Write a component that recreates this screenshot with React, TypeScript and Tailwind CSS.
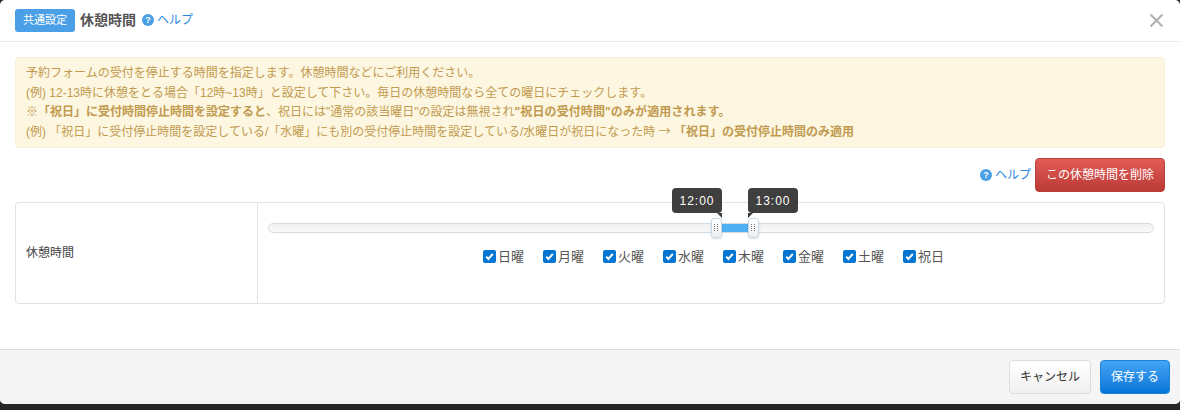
const FONT = "font-['Liberation_Sans','Noto_Sans_CJK_JP',sans-serif]"

const days = ["日曜", "月曜", "火曜", "水曜", "木曜", "金曜", "土曜", "祝日"]

const HelpIcon = () => (
    <span className="inline-flex items-center justify-center w-[12px] h-[12px] rounded-full bg-[#4a9fe6] text-white text-[9px] font-bold leading-none">?</span>
)

const Check = () => (
    <span className="inline-flex items-center justify-center w-[13px] h-[13px] rounded-[2px] bg-[#0075d2]">
        <svg width="11" height="11" viewBox="0 0 11 11" fill="none">
            <path d="M2.2 5.6 L4.4 7.9 L8.8 2.9" stroke="#fff" strokeWidth="2" />
        </svg>
    </span>
)

const Handle = () => (
    <div className="flex items-center justify-center w-[11px] h-[20px] rounded-[3px] border border-[#c9d9e6] bg-gradient-to-b from-white to-[#eeeeee] shadow-sm">
        <svg width="5" height="8" viewBox="0 0 5 8" fill="#777">
            <rect x="0" y="0" width="1" height="1" /><rect x="3" y="0" width="1" height="1" />
            <rect x="0" y="2" width="1" height="1" /><rect x="3" y="2" width="1" height="1" />
            <rect x="0" y="4" width="1" height="1" /><rect x="3" y="4" width="1" height="1" />
            <rect x="0" y="6" width="1" height="1" /><rect x="3" y="6" width="1" height="1" />
        </svg>
    </div>
)

const App = () => {
    return (
        <div className={`${FONT} w-[1180px] h-[410px] bg-[#262626] overflow-hidden flex flex-col text-[#555]`}>
            <div className="h-[404px] shrink-0 bg-white rounded-b-[5px] rounded-t-[5px] flex flex-col">
                <div className="h-[42px] shrink-0 flex items-center pl-[15px] pr-[16px] pb-[1px] border-b border-[#e9e9e9]">
                    <span className="w-[60px] h-[23px] flex items-center justify-center rounded-[3px] bg-[#4a9fe6] text-white text-[11px]">共通設定</span>
                    <span className="ml-[5px] text-[14px] font-bold text-[#555]">休憩時間</span>
                    <span className="ml-[6px] flex items-center gap-[3px] text-[12px] text-[#2b8ae0]"><HelpIcon />ヘルプ</span>
                    <svg className="ml-auto" width="15" height="15" viewBox="0 0 15 15" stroke="#b3b3b3" strokeWidth="2.2">
                        <path d="M1.5 1.5 L13.5 13.5 M13.5 1.5 L1.5 13.5" />
                    </svg>
                </div>

                <div className="px-[15px] pt-[15px] flex-1">
                    <div className="h-[91px] rounded-[4px] border border-[#f8eed8] bg-[#fdf6e1] px-[10px] pt-[6px] text-[12px] leading-[19.7px] text-[#c19a4f]">
                        <p>予約フォームの受付を停止する時間を指定します。休憩時間などにご利用ください。</p>
                        <p>(例) 12-13時に休憩をとる場合「12時~13時」と設定して下さい。毎日の休憩時間なら全ての曜日にチェックします。</p>
                        <p>※<span className="font-bold">「祝日」に受付時間停止時間を設定すると</span>、祝日には"通常の該当曜日"の設定は無視され<span className="font-bold tracking-[0.1px]">"祝日の受付時間"のみが適用されます。</span></p>
                        <p>(例) 「祝日」に受付停止時間を設定している/「水曜」にも別の受付停止時間を設定している/水曜日が祝日になった時 <span className="font-['Noto_Sans_CJK_JP',sans-serif] leading-none">→</span> <span className="font-bold">「祝日」の受付停止時間のみ適用</span></p>
                    </div>

                    <div className="mt-[10px] flex items-center justify-end">
                        <span className="flex items-center gap-[3px] text-[12px] text-[#2b8ae0]"><HelpIcon />ヘルプ</span>
                        <button className="ml-[4px] w-[130px] h-[34px] rounded-[4px] border border-[#b8403c] bg-gradient-to-b from-[#e35b57] to-[#bb3a36] text-white text-[12px]">この休憩時間を削除</button>
                    </div>

                    <div className="mt-[10px] h-[102px] rounded-[4px] border border-[#e2e2e2] flex">
                        <div className="w-[242px] shrink-0 flex items-center pl-[10px] border-r border-[#e2e2e2] text-[12px] text-[#444]">休憩時間</div>
                        <div className="flex-1 pl-[10px] pr-[10px] pt-[20px]">
                            <div className="relative h-[10px] rounded-[5px] border border-[#d5dde3] bg-gradient-to-b from-[#f0f1f1] to-[#f9f9f9]">
                                <div className="absolute left-[453px] top-[0px] w-[27px] h-[8px] bg-[#4fb0f3]" />
                                <div className="absolute left-[442px] top-[-6px]"><Handle /></div>
                                <div className="absolute left-[479px] top-[-6px]"><Handle /></div>
                                <div className="absolute left-[403px] top-[-36px] w-[50px] h-[25px] rounded-[4px] bg-[#3f3f3f] flex items-center justify-center text-white text-[12px] tracking-[1px]">12:00</div>
                                <div className="absolute left-[479px] top-[-36px] w-[50px] h-[25px] rounded-[4px] bg-[#3f3f3f] flex items-center justify-center text-white text-[12px] tracking-[1px]">13:00</div>
                                <div className="absolute left-[448px] top-[-11px] w-0 h-0 border-t-[5px] border-l-[5px] border-t-[#3f3f3f] border-l-transparent" />
                                <div className="absolute left-[479px] top-[-11px] w-0 h-0 border-t-[5px] border-r-[5px] border-t-[#3f3f3f] border-r-transparent" />
                            </div>
                            <div className="mt-[14px] flex justify-center pl-[24px]">
                                {days.map((d) => (
                                    <label key={d} className="w-[60px] flex items-center gap-[2px] text-[13px] text-[#555]"><Check />{d}</label>
                                ))}
                            </div>
                        </div>
                    </div>
                </div>

                <div className="h-[55px] shrink-0 rounded-b-[5px] border-t border-[#dddddd] bg-[#f5f5f5] flex items-center justify-end pr-[10px] gap-[9px]">
                    <button className="w-[82px] h-[34px] rounded-[4px] border border-[#dcdcdc] bg-gradient-to-b from-white to-[#f0f0f0] text-[12px] text-[#333]">キャンセル</button>
                    <button className="w-[70px] h-[34px] rounded-[4px] border border-[#1a82d6] bg-gradient-to-b from-[#43a5f5] to-[#0075d8] text-white text-[12px]">保存する</button>
                </div>
            </div>
        </div>
    )
}

export default App
